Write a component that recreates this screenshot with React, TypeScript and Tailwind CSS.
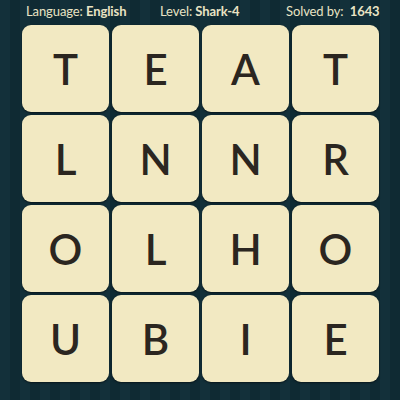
const letters = ['T', 'E', 'A', 'T', 'L', 'N', 'N', 'R', 'O', 'L', 'H', 'O', 'U', 'B', 'I', 'E']

export default function App() {
  return (
    <div
      className="w-[400px] h-[400px] overflow-hidden bg-[repeating-linear-gradient(90deg,#13303a_0px,#13303a_10px,#0f2a33_10px,#0f2a33_20px)]"
      style={{ fontFamily: 'Lato, "Open Sans", sans-serif' }}
    >
      <div className="h-[25px] flex items-center text-[13px] tracking-[-0.1px] text-[#e9e3c4] leading-none pb-[2px] whitespace-nowrap pl-[26px]">
        <div className="w-[134px] shrink-0">
          Language: <span className="font-bold">English</span>
        </div>
        <div className="w-[126px] shrink-0">
          Level: <span className="font-bold">Shark-4</span>
        </div>
        <div className="shrink-0">
          Solved by: <span className="font-bold ml-[3px]">1643</span>
        </div>
      </div>
      <div className="grid grid-cols-4 gap-[3px] ml-[22px] w-[357px]">
        {letters.map((l, i) => (
          <div
            key={i}
            className="h-[87px] rounded-[9px] bg-[#f2e9c2] shadow-[0_1px_2px_rgba(0,0,0,0.5)] flex items-center justify-center text-[42px] font-semibold text-[#2b2620] leading-none"
          >
            {l}
          </div>
        ))}
      </div>
    </div>
  )
}
